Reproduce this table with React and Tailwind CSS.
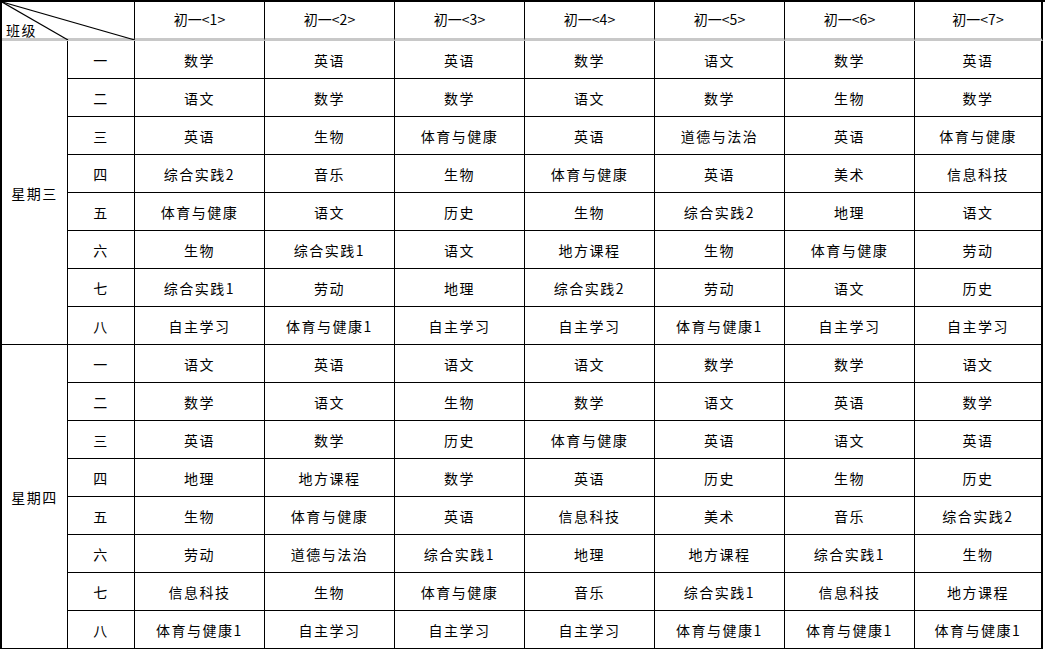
import React from 'react';

const classes = ['初一<1>', '初一<2>', '初一<3>', '初一<4>', '初一<5>', '初一<6>', '初一<7>'];
const periods = ['一', '二', '三', '四', '五', '六', '七', '八'];

const days = [
    {
        name: '星期三',
        rows: [
            ['数学', '英语', '英语', '数学', '语文', '数学', '英语'],
            ['语文', '数学', '数学', '语文', '数学', '生物', '数学'],
            ['英语', '生物', '体育与健康', '英语', '道德与法治', '英语', '体育与健康'],
            ['综合实践2', '音乐', '生物', '体育与健康', '英语', '美术', '信息科技'],
            ['体育与健康', '语文', '历史', '生物', '综合实践2', '地理', '语文'],
            ['生物', '综合实践1', '语文', '地方课程', '生物', '体育与健康', '劳动'],
            ['综合实践1', '劳动', '地理', '综合实践2', '劳动', '语文', '历史'],
            ['自主学习', '体育与健康1', '自主学习', '自主学习', '体育与健康1', '自主学习', '自主学习'],
        ],
    },
    {
        name: '星期四',
        rows: [
            ['语文', '英语', '语文', '语文', '数学', '数学', '语文'],
            ['数学', '语文', '生物', '数学', '语文', '英语', '数学'],
            ['英语', '数学', '历史', '体育与健康', '英语', '语文', '英语'],
            ['地理', '地方课程', '数学', '英语', '历史', '生物', '历史'],
            ['生物', '体育与健康', '英语', '信息科技', '美术', '音乐', '综合实践2'],
            ['劳动', '道德与法治', '综合实践1', '地理', '地方课程', '综合实践1', '生物'],
            ['信息科技', '生物', '体育与健康', '音乐', '综合实践1', '信息科技', '地方课程'],
            ['体育与健康1', '自主学习', '自主学习', '自主学习', '体育与健康1', '体育与健康1', '体育与健康1'],
        ],
    },
];

const App = () => {
    return (
        <div className="w-[1045px] h-[651px] bg-white overflow-hidden" style={{ fontFamily: '"Noto Sans CJK SC", "Noto Sans", sans-serif' }}>
            <div className="w-[1045px] border-t-2 border-l-2 border-black grid grid-cols-[66px_67px_repeat(6,130px)_128px] text-[14px] text-black leading-none tracking-[1.5px]">
                {/* header */}
                <div className="col-span-2 relative h-[39px] border-r border-b-[3px] border-r-black border-b-[#c8c8c8]">
                    <svg className="absolute left-0 top-0" width="133" height="38" viewBox="0 0 133 38">
                        <line x1="0" y1="0" x2="133" y2="38" stroke="black" strokeWidth="1.2" />
                        <line x1="0" y1="0" x2="66" y2="38" stroke="black" strokeWidth="1.2" />
                    </svg>
                    <span className="absolute left-[4px] bottom-[1px]">班级</span>
                </div>
                {classes.map((c, i) => (
                    <div
                        key={c}
                        className={`h-[39px] flex items-center justify-center border-b-[3px] border-b-[#c8c8c8] pb-[2px] tracking-normal ${i === 6 ? 'border-r-2 border-r-black' : 'border-r border-r-black'}`}
                    >
                        {c}
                    </div>
                ))}

                {days.map((day) => (
                    <React.Fragment key={day.name}>
                        <div className="row-span-8 flex items-center justify-center border-r border-b border-black">
                            {day.name}
                        </div>
                        {day.rows.map((row, ri) => (
                            <React.Fragment key={ri}>
                                <div className="h-[38px] flex items-center justify-center border-r border-b border-black">
                                    {periods[ri]}
                                </div>
                                {row.map((subject, ci) => (
                                    <div
                                        key={ci}
                                        className={`h-[38px] flex items-center justify-center border-b border-black ${ci === 6 ? 'border-r-2' : 'border-r'}`}
                                    >
                                        {subject}
                                    </div>
                                ))}
                            </React.Fragment>
                        ))}
                    </React.Fragment>
                ))}
            </div>
        </div>
    );
};

export default App;
